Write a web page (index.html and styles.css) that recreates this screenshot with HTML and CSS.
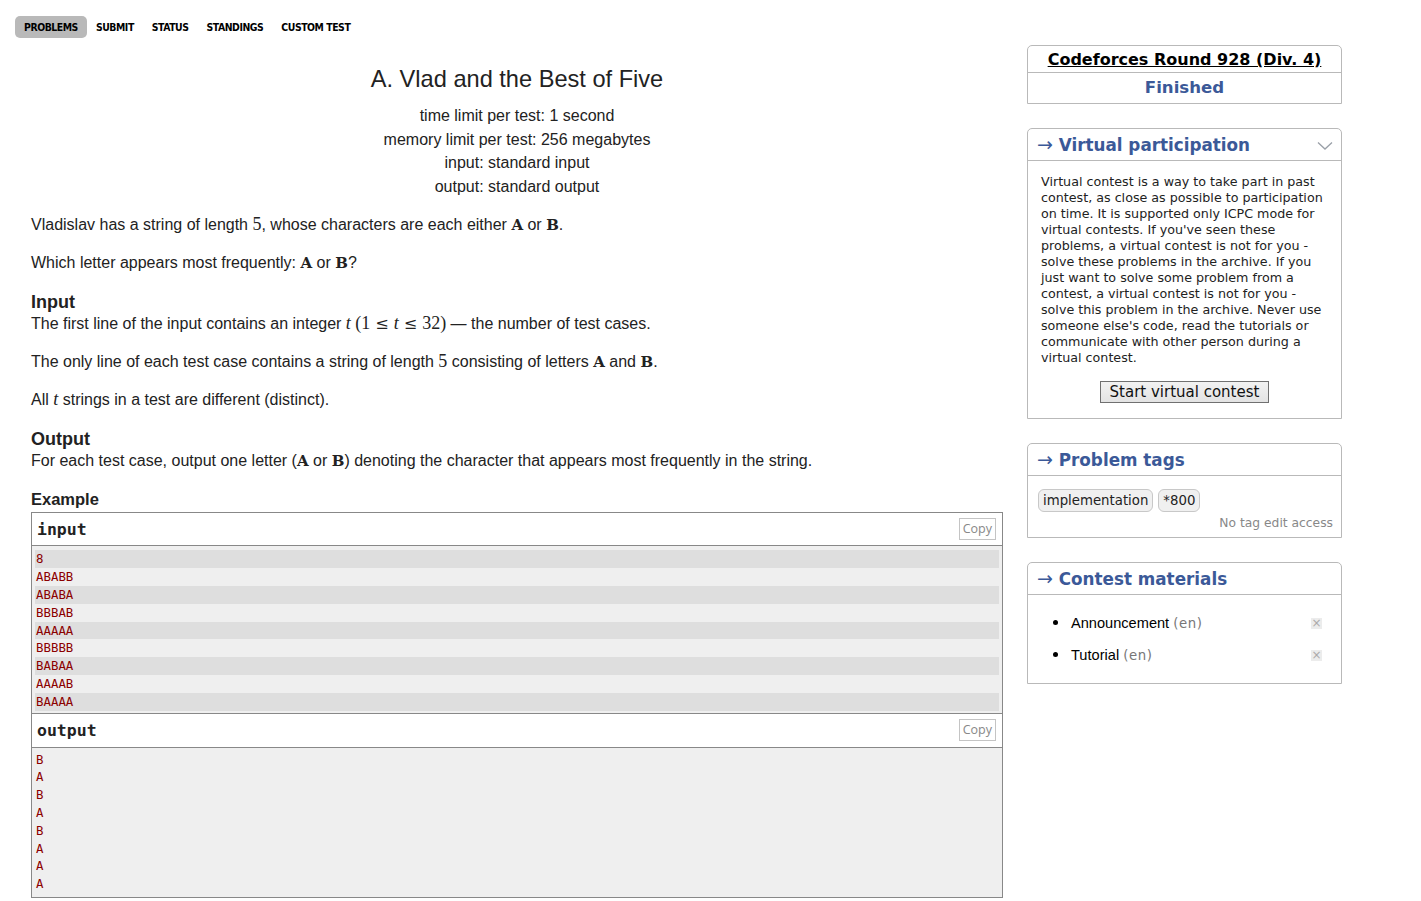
FILE: index.html
```html
<!DOCTYPE html>
<html lang="en">
<head>
<meta charset="utf-8">
<title>Problem - A - Codeforces</title>
<link rel="stylesheet" href="styles.css">
</head>
<body>
<div class="layout">
  <div class="main">
    <ul class="second-menu">
      <li class="tab selected">PROBLEMS</li>
      <li class="tab">SUBMIT</li>
      <li class="tab">STATUS</li>
      <li class="tab">STANDINGS</li>
      <li class="tab">CUSTOM TEST</li>
    </ul>

    <div class="problem">
      <div class="header">
        <div class="title">A. Vlad and the Best of Five</div>
        <div class="meta">time limit per test: 1 second</div>
        <div class="meta">memory limit per test: 256 megabytes</div>
        <div class="meta">input: standard input</div>
        <div class="meta">output: standard output</div>
      </div>

      <p class="first">Vladislav has a string of length <span class="mn">5</span>, whose characters are each either <span class="tt">A</span> or <span class="tt">B</span>.</p>
      <p>Which letter appears most frequently: <span class="tt">A</span> or <span class="tt">B</span>?</p>

      <div class="section-title">Input</div>
      <p>The first line of the input contains an integer <span class="mi">t</span> <span class="mn">(1<span class="mo">≤</span><span class="mi">t</span><span class="mo">≤</span>32)</span> — the number of test cases.</p>
      <p>The only line of each test case contains a string of length <span class="mn">5</span> consisting of letters <span class="tt">A</span> and <span class="tt">B</span>.</p>
      <p>All <span class="mi">t</span> strings in a test are different (distinct).</p>

      <div class="section-title">Output</div>
      <p>For each test case, output one letter (<span class="tt">A</span> or <span class="tt">B</span>) denoting the character that appears most frequently in the string.</p>

      <div class="example-title">Example</div>
      <div class="sample">
        <div class="sample-head">
          <span class="sample-name">input</span>
          <span class="copy">Copy</span>
        </div>
        <div class="sample-body input-body">
          <div class="line odd">8</div>
          <div class="line">ABABB</div>
          <div class="line odd">ABABA</div>
          <div class="line">BBBAB</div>
          <div class="line odd">AAAAA</div>
          <div class="line">BBBBB</div>
          <div class="line odd">BABAA</div>
          <div class="line">AAAAB</div>
          <div class="line odd">BAAAA</div>
        </div>
        <div class="sample-head out-head">
          <span class="sample-name">output</span>
          <span class="copy">Copy</span>
        </div>
        <div class="sample-body output-body">
          <div class="line">B</div>
          <div class="line">A</div>
          <div class="line">B</div>
          <div class="line">A</div>
          <div class="line">B</div>
          <div class="line">A</div>
          <div class="line">A</div>
          <div class="line">A</div>
        </div>
      </div>
    </div>
  </div>

  <aside class="sidebar">
    <div class="roundbox">
      <div class="round-name"><a href="#">Codeforces Round 928 (Div. 4)</a></div>
      <div class="round-status">Finished</div>
    </div>

    <div class="roundbox">
      <div class="caption">
        <span><span class="arrow">→</span> Virtual participation</span>
        <svg class="chev" width="16" height="10" viewBox="0 0 16 10"><path d="M1 1.5 L8 8 L15 1.5" fill="none" stroke="#9aa0a8" stroke-width="1.3"/></svg>
      </div>
      <div class="vp-body">
        <p class="vp-text">Virtual contest is a way to take part in past contest, as close as possible to participation on time. It is supported only ICPC mode for virtual contests. If you've seen these problems, a virtual contest is not for you - solve these problems in the archive. If you just want to solve some problem from a contest, a virtual contest is not for you - solve this problem in the archive. Never use someone else's code, read the tutorials or communicate with other person during a virtual contest.</p>
        <div class="vp-action"><button class="vp-btn">Start virtual contest</button></div>
      </div>
    </div>

    <div class="roundbox">
      <div class="caption"><span><span class="arrow">→</span> Problem tags</span></div>
      <div class="tags-body">
        <div class="tags">
          <span class="tag">implementation</span>
          <span class="tag">*800</span>
        </div>
        <div class="no-access">No tag edit access</div>
      </div>
    </div>

    <div class="roundbox">
      <div class="caption"><span><span class="arrow">→</span> Contest materials</span></div>
      <ul class="materials">
        <li><span class="mat-name">Announcement <span class="lang">(en)</span></span><span class="xicon">×</span></li>
        <li><span class="mat-name">Tutorial <span class="lang">(en)</span></span><span class="xicon">×</span></li>
      </ul>
    </div>
  </aside>
</div>
</body>
</html>
```

FILE: styles.css
```css
* { box-sizing: border-box; }

body {
  margin: 0;
  background: #fff;
  color: #222;
  font-family: "Liberation Sans", Arial, sans-serif;
}

.layout {
  display: flex;
  align-items: flex-start;
}

.main {
  width: 1003px;
  padding: 16px 0 0 15px;
}

/* nav */
.second-menu {
  list-style: none;
  margin: 0;
  padding: 0;
  display: flex;
  height: 22px;
}
.tab {
  padding: 0 9px;
  height: 22px;
  line-height: 23px;
  font-family: "DejaVu Sans Condensed", "DejaVu Sans", sans-serif;
  font-stretch: condensed;
  font-weight: bold;
  font-size: 10.4px;
  letter-spacing: -0.45px;
  color: #000;
}
.tab.selected {
  background: #b9b9b9;
  border-radius: 5px;
}

/* problem */
.problem {
  margin-left: 16px;
  width: 972px;
  font-size: 16px;
  color: #222;
}
.header {
  text-align: center;
  margin-top: 26px;
}
.title {
  font-size: 23.6px;
  line-height: 30px;
  margin-bottom: 10px;
}
.meta {
  line-height: 23.6px;
}
.problem p {
  margin: 14px 0 0 0;
  line-height: 24px;
}
.problem p.first { margin-top: 15px; }
.section-title {
  font-weight: bold;
  font-size: 18px;
  line-height: 20px;
  margin-top: 17px;
  color: #222;
}
.problem .section-title + p { margin-top: 0; }

.mn, .mi, .mo, .tt { line-height: 1; }
.mn, .mi {
  font-family: "Liberation Serif", "Times New Roman", serif;
  font-size: 18px;
}
.mi { font-style: italic; }
.mo {
  font-family: "DejaVu Serif", serif;
  font-size: 16px;
  margin: 0 5px;
}
.tt {
  font-family: "DejaVu Serif", serif;
  font-weight: bold;
  font-size: 15px;
}

.example-title {
  font-weight: bold;
  font-size: 16.5px;
  line-height: 20px;
  margin-top: 16px;
  margin-bottom: 3px;
}

.sample {
  border: 1px solid #888;
}
.sample-head {
  display: flex;
  justify-content: space-between;
  align-items: center;
  height: 33px;
  padding: 0 6px 0 5px;
  border-bottom: 1px solid #888;
  background: #fff;
}
.out-head {
  height: 35px;
  border-top: 1px solid #888;
}
.sample-name {
  font-family: "DejaVu Sans Mono", monospace;
  font-weight: bold;
  font-size: 16.5px;
  color: #222;
}
.copy {
  font-family: "Open Sans", "DejaVu Sans", sans-serif;
  font-size: 12.5px;
  color: #888;
  border: 1px solid #c4c4c4;
  padding: 0 3px;
  height: 22px;
  line-height: 20px;
}
.sample-body {
  background: #efefef;
  padding: 4px 3px 2px 3px;
  font-family: "DejaVu Sans Mono", monospace;
  font-size: 12.4px;
  color: #8b0000;
}
.output-body {
  padding: 3px 3px 4px 3px;
}
.line {
  height: 17.8px;
  line-height: 17.8px;
  padding-left: 1px;
}
.line.odd {
  background: #dedede;
}

/* sidebar */
.sidebar {
  width: 315px;
  margin-left: 24px;
  margin-top: 45px;
  font-family: "DejaVu Sans", Verdana, sans-serif;
}
.roundbox {
  border: 1px solid #b9b9b9;
  border-radius: 5px 5px 0 0;
  margin-bottom: 24px;
  background: #fff;
}
.round-name {
  text-align: center;
  height: 27px;
  line-height: 27px;
  border-bottom: 1px solid #b9b9b9;
  font-size: 16px;
  font-weight: bold;
}
.round-name a {
  color: #000;
  text-decoration: underline;
}
.round-status {
  text-align: center;
  height: 30px;
  line-height: 29px;
  font-size: 16.6px;
  font-weight: bold;
  color: #3b5998;
}
.caption {
  display: flex;
  justify-content: space-between;
  align-items: center;
  height: 32px;
  padding: 0 8px 0 9px;
  border-bottom: 1px solid #b9b9b9;
  font-size: 16.8px;
  font-weight: bold;
  color: #3b5998;
}
.arrow {
  font-weight: normal;
  font-family: "DejaVu Sans", sans-serif;
  font-size: 19px;
  line-height: 1;
}
.chev { margin-top: 2px; }

.vp-body {
  padding: 13px 13px 15px 13px;
}
.vp-text {
  margin: 0;
  font-size: 12.7px;
  line-height: 16px;
  color: #222;
}
.vp-action {
  text-align: center;
  margin-top: 15px;
}
.vp-btn {
  font-family: "DejaVu Sans", sans-serif;
  font-size: 15px;
  color: #111;
  height: 22px;
  padding: 0 9px;
  line-height: 18px;
  border: 1px solid #707070;
  background: linear-gradient(#f2f2f2, #e3e3e3);
  border-radius: 0;
}

.tags-body {
  padding: 13px 8px 6px 10px;
}
.tags {
  display: flex;
  gap: 5px;
}
.tag {
  font-size: 13.3px;
  height: 23px;
  line-height: 22px;
  padding: 0 4px;
  background: #f0f0f0;
  border: 1px solid #c8c8c8;
  border-radius: 6px;
  color: #222;
}
.no-access {
  text-align: right;
  font-size: 12.3px;
  color: #888;
  margin-top: 3px;
  line-height: 16px;
}

.materials {
  margin: 0;
  padding: 12px 19px 12px 43px;
  list-style: none;
}
.materials li {
  display: flex;
  justify-content: space-between;
  align-items: center;
  height: 32px;
  line-height: 22px;
  position: relative;
}
.materials li::before {
  content: "";
  position: absolute;
  left: -18px;
  top: 13px;
  width: 5px;
  height: 5px;
  border-radius: 50%;
  background: #000;
}
.mat-name {
  font-family: "Liberation Sans", Arial, sans-serif;
  font-size: 14.6px;
  color: #000;
}
.lang {
  font-family: "DejaVu Sans", sans-serif;
  font-size: 13.3px;
  color: #777;
  letter-spacing: 0.6px;
}
.xicon {
  width: 11px;
  height: 11px;
  background: #ececec;
  color: #aaa;
  font-size: 12px;
  line-height: 11px;
  text-align: center;
  font-family: "DejaVu Sans", sans-serif;
}
```
